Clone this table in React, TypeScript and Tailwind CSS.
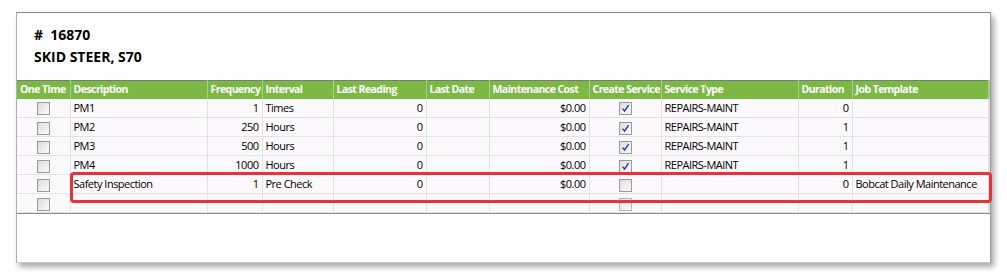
import React from "react"

type Row = {
  oneTime: boolean
  desc: string
  freq: string
  interval: string
  reading: string
  cost: string
  create: boolean | null
  type: string
  duration: string
  template: string
}

const rows: Row[] = [
  { oneTime: false, desc: "PM1", freq: "1", interval: "Times", reading: "0", cost: "$0.00", create: true, type: "REPAIRS-MAINT", duration: "0", template: "" },
  { oneTime: false, desc: "PM2", freq: "250", interval: "Hours", reading: "0", cost: "$0.00", create: true, type: "REPAIRS-MAINT", duration: "1", template: "" },
  { oneTime: false, desc: "PM3", freq: "500", interval: "Hours", reading: "0", cost: "$0.00", create: true, type: "REPAIRS-MAINT", duration: "1", template: "" },
  { oneTime: false, desc: "PM4", freq: "1000", interval: "Hours", reading: "0", cost: "$0.00", create: true, type: "REPAIRS-MAINT", duration: "1", template: "" },
  { oneTime: false, desc: "Safety Inspection", freq: "1", interval: "Pre Check", reading: "0", cost: "$0.00", create: false, type: "", duration: "0", template: "Bobcat Daily Maintenance" },
  { oneTime: false, desc: "", freq: "", interval: "", reading: "", cost: "", create: false, type: "", duration: "", template: "" },
]

const cols = [
  { label: "One Time", w: "w-[53px]" },
  { label: "Description", w: "w-[137px]" },
  { label: "Frequency", w: "w-[55px]" },
  { label: "Interval", w: "w-[71px]" },
  { label: "Last Reading", w: "w-[93px]" },
  { label: "Last Date", w: "w-[63px]" },
  { label: "Maintenance Cost", w: "w-[100px]" },
  { label: "Create Service", w: "w-[72px]" },
  { label: "Service Type", w: "w-[137px]" },
  { label: "Duration", w: "w-[54px]" },
  { label: "Job Template", w: "w-[136px]" },
  { label: "", w: "" },
]

function Check({ checked, faded }: { checked: boolean; faded?: boolean }) {
  return (
    <span
      className={`inline-flex h-[13px] w-[13px] items-center justify-center border border-[#9a9a9a] bg-gradient-to-br from-[#dcdcdc] to-[#fbfbfb] align-middle ${faded ? "opacity-70" : ""}`}
    >
      {checked && (
        <svg width="9" height="9" viewBox="0 0 9 9">
          <path d="M1.5 4.6 L3.6 7 L7.6 1.2" fill="none" stroke="#2b3f96" strokeWidth="1.4" />
        </svg>
      )}
    </span>
  )
}

export default function App() {
  const td = "h-[19px] border-r border-b border-[#e2e2e2] px-[3px] py-0 leading-[18px] whitespace-nowrap"
  return (
    <div className="h-[275px] w-[1007px] bg-white pl-[16px] pt-[12px] font-['Open_Sans',sans-serif] text-[11px] tracking-[-0.5px] text-black">
      <div className="relative h-[251px] w-[975px] border border-t-[#8a8a8a] border-l-[#b0b0b0] border-r-[#9a9a9a] border-b-[#c8c8c8] bg-white shadow-[3px_4px_6px_rgba(0,0,0,0.35)]">
        <div className="h-[67px] pl-[17px] pt-[11px] text-[14px] font-bold leading-[22px] tracking-normal">
          <div># &nbsp;16870</div>
          <div>SKID STEER, S70</div>
        </div>
        <table className="w-full table-fixed border-collapse border-t border-[#7a7a7a]">
          <thead>
            <tr className="bg-[#7cb944] text-white">
              {cols.map((c, i) => (
                <th
                  key={i}
                  className={`${c.w} h-[18px] border-r border-[#a9cf85] px-[3px] py-0 text-left text-[10.5px] font-bold leading-[17px] tracking-[-0.55px] whitespace-nowrap`}
                >
                  {c.label}
                </th>
              ))}
            </tr>
          </thead>
          <tbody>
            {rows.map((r, i) => (
              <tr key={i} className="bg-[#fcf9fc]">
                <td className={`${td} text-center`}>
                  <Check checked={r.oneTime} />
                </td>
                <td className={td}>{r.desc}</td>
                <td className={`${td} text-right`}>{r.freq}</td>
                <td className={td}>{r.interval}</td>
                <td className={`${td} text-right`}>{r.reading}</td>
                <td className={td}></td>
                <td className={`${td} text-right`}>{r.cost}</td>
                <td className={`${td} text-center`}>
                  <Check checked={!!r.create} faded={i === rows.length - 1} />
                </td>
                <td className={td}>{r.type}</td>
                <td className={`${td} text-right`}>{r.duration}</td>
                <td className={td}>{r.template}</td>
                <td className={td}></td>
              </tr>
            ))}
          </tbody>
        </table>
        <div className="border-t border-[#8a8a8a]" />
        <div className="pointer-events-none absolute left-[53px] top-[159px] h-[31px] w-[922px] rounded-[4px] border-[3px] border-[#e8323a]" />
      </div>
    </div>
  )
}
